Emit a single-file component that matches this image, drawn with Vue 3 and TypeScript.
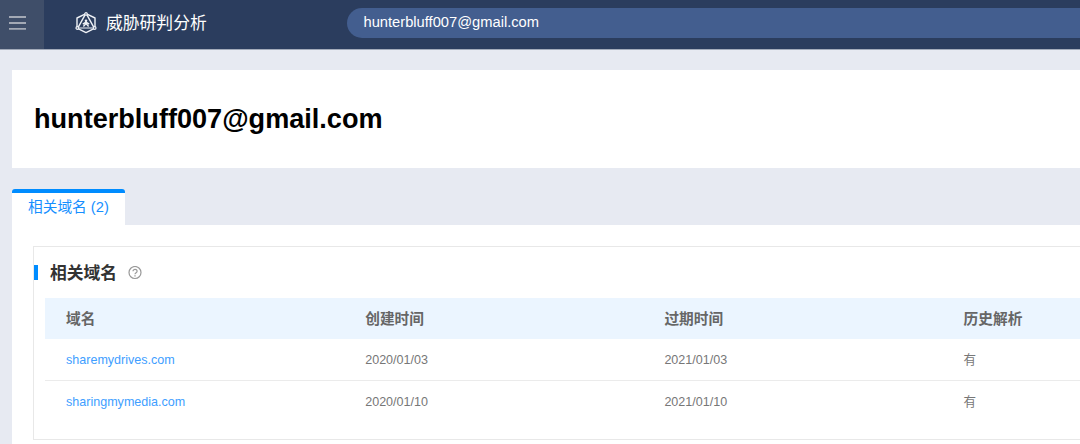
<script setup lang="ts">
interface DomainRow {
  domain: string
  created: string
  expires: string
  history: string
}

const query = 'hunterbluff007@gmail.com'
const columns: string[] = ['域名', '创建时间', '过期时间', '历史解析']
const rows: DomainRow[] = [
  { domain: 'sharemydrives.com', created: '2020/01/03', expires: '2021/01/03', history: '有' },
  { domain: 'sharingmymedia.com', created: '2020/01/10', expires: '2021/01/10', history: '有' },
]
</script>

<template>
  <div class="page">
    <header class="topbar">
      <button class="menu" aria-label="menu">
        <svg width="17" height="14" viewBox="0 0 17 14">
          <path d="M0 1h17M0 7h17M0 12.8h17" stroke="#a3a9b5" stroke-width="1.8" />
        </svg>
      </button>
      <div class="brand">
        <svg class="logo" width="22" height="22" viewBox="0 0 22 22" fill="none" stroke="#eef1f6">
          <path d="M11 1.6 20 6v10.2L11 20.6 2 16.2V6z" stroke-width="1.4" stroke-linejoin="round" />
          <path d="M10.2 2.6 3 15.6M11.8 2.6 19 15.6" stroke-width="1.4" />
          <path d="M3.5 16h15" stroke-width="1" />
          <path d="M11 8v4M7.8 12.2 11 10.2l3.2 2M8.4 14.4l2.6-2.8 2.6 2.8" stroke-width="1.4" />
          <g fill="#2b3d5e" stroke-width="1.2">
            <circle cx="11" cy="1.9" r="1.2" />
            <circle cx="2.3" cy="16" r="1.3" />
            <circle cx="19.7" cy="16" r="1.3" />
          </g>
          <circle cx="11" cy="8.8" r="1.3" fill="#eef1f6" stroke="none" />
        </svg>
        <span class="brand-name">威胁研判分析</span>
      </div>
      <div class="search">{{ query }}</div>
    </header>

    <main class="content">
      <section class="summary"><h1>{{ query }}</h1></section>
      <nav class="tabs"><a class="tab">相关域名 (2)</a></nav>
      <section class="panel">
        <div class="box">
          <div class="box-title">
            <h2>相关域名</h2>
            <svg class="help" width="14" height="14" viewBox="0 0 14 14" fill="none" stroke="#999">
              <circle cx="7" cy="6.5" r="6" stroke-width="1.2" />
              <path d="M5 5.3c0-2.6 4.1-2.5 4.1 0C9.1 6.6 7 6.8 7 8.3" stroke-width="1.2" />
              <path d="M7 9.2v1.3" stroke-width="1.3" />
            </svg>
          </div>
          <div class="table">
            <div class="row head">
              <span v-for="c in columns" :key="c">{{ c }}</span>
            </div>
            <div v-for="r in rows" :key="r.domain" class="row">
              <a>{{ r.domain }}</a>
              <span>{{ r.created }}</span>
              <span>{{ r.expires }}</span>
              <span>{{ r.history }}</span>
            </div>
          </div>
        </div>
      </section>
    </main>
  </div>
</template>

<style>
body {
  margin: 0;
  overflow: hidden;
}
</style>

<style scoped>
.page {
  height: 444px;
  overflow: hidden;
  background: #e7eaf2;
  font-family: "Liberation Sans", "Noto Sans CJK SC", sans-serif;
  font-size: 12.55px;
  color: #777;
}
.topbar {
  box-sizing: border-box;
  height: 50px;
  display: flex;
  align-items: stretch;
  background: #2b3d5e;
  border-bottom: 1px solid #a3abba;
}
.menu {
  width: 44px;
  padding: 0 0 4px 9px;
  border: 0;
  background: #3f4e69;
  display: flex;
  align-items: center;
}
.brand {
  width: 303px;
  padding: 0 0 4px 31px;
  box-sizing: border-box;
  display: flex;
  align-items: center;
}
.brand-name {
  margin-left: 9px;
  padding-top: 2px;
  font-size: 16.8px;
  line-height: 24px;
  color: #fff;
}
.search {
  flex: 1;
  height: 30px;
  margin-top: 8px;
  padding-left: 16.5px;
  border-radius: 15px 0 0 15px;
  background: #435e8f;
  color: #fff;
  font-size: 14.7px;
  line-height: 29px;
}
.content {
  padding: 20px 0 0 12px;
}
.summary {
  height: 98px;
  background: #fff;
  padding-left: 22px;
}
h1 {
  margin: 0;
  font-size: 27.1px;
  line-height: 97px;
  color: #000;
}
.tabs {
  display: flex;
  margin-top: 21px;
}
.tab {
  box-sizing: border-box;
  width: 113px;
  height: 36px;
  padding-left: 16px;
  border-top: 4px solid #008cff;
  border-radius: 3px 3px 0 0;
  background: #fff;
  color: #168fff;
  font-size: 14.7px;
  line-height: 29px;
}
.panel {
  height: 240px;
  padding: 21px 0 0 21px;
  background: #fff;
}
.box {
  box-sizing: border-box;
  height: 194px;
  border: 1px solid #e8e8e8;
  border-right: 0;
}
.box-title {
  display: flex;
  align-items: center;
  height: 51px;
}
h2 {
  margin: 0;
  padding-left: 12px;
  border-left: 4px solid #008cff;
  color: #333;
  font-size: 16.8px;
  height: 15px;
  line-height: 17px;
}
.help {
  margin-left: 11px;
}
.table {
  margin-left: 11px;
}
.row {
  display: grid;
  grid-template-columns: repeat(4, 299.2px);
  height: 41px;
  line-height: 43px;
  padding-left: 21px;
  border-bottom: 1px solid #ebebeb;
}
.row:last-child {
  border-bottom: 0;
}
.row a {
  color: #409eff;
}
.head {
  background: #ebf5ff;
  border-bottom: 0;
  color: #666;
  font-size: 14.7px;
  font-weight: bold;
}
</style>
